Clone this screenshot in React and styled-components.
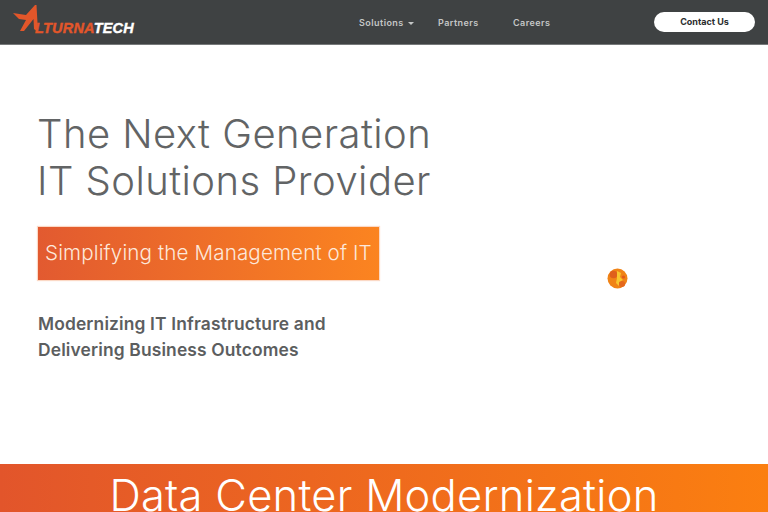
import React from "react";
import styled, { createGlobalStyle } from "styled-components";

const Global = createGlobalStyle`
  html, body { margin: 0; padding: 0; background: #fff; overflow: hidden; }
  body { font-family: "Inter", "Lato", sans-serif; width: 768px; height: 512px; }
`;
const Page = styled.div`
  width: 768px; height: 512px; overflow: hidden; display: flex; flex-direction: column;
`;
const Header = styled.header`
  height: 44px; flex: none; background: #3f4243; display: flex; align-items: center;
  border-bottom: 1px solid #76797a; box-sizing: content-box;
`;
const LogoWrap = styled.div`
  width: 359px; flex: none; display: flex; align-items: center; padding-left: 13px; box-sizing: border-box; height: 44px;
`;
const LogoMark = styled.svg` width: 32px; height: 28px; flex: none; margin-right: -10px; margin-top: -7px; `;
const LogoText = styled.span`
  font-family: "Liberation Sans", sans-serif; font-style: italic; font-weight: 700; font-size: 14.5px;
  letter-spacing: 0.2px; margin-top: 11px; color: #e2562a; -webkit-text-stroke: 0.4px currentColor;
`;
const LogoTech = styled.span` color: #fff; `;
const Nav = styled.nav` display: flex; align-items: center; flex: none; width: 295px; height: 44px; `;
const NavItem = styled.a`
  font-size: 9px; font-weight: 600; letter-spacing: 0.45px; color: #c4c6c6; width: ${p => p.$w}px; flex: none;
  display: flex; align-items: center; gap: 4px; margin-left: ${p => p.$offset || 0}px;
`;
const Caret = styled.span`
  width: 0; height: 0; border-left: 3px solid transparent; border-right: 3px solid transparent;
  border-top: 3px solid #c4c6c6; margin-top: 2px;
`;
const ContactButton = styled.button`
  width: 101px; height: 20px; margin-top: -1px; background: #fff; border: 0; border-radius: 10px; padding: 0;
  font-family: inherit; font-weight: 700; font-size: 9px; letter-spacing: 0; color: #2a2c2d;
`;
const Hero = styled.main`
  flex: 1; min-height: 0; position: relative; padding: 66px 0 0 38px; box-sizing: border-box;
`;
const Title = styled.h1`
  margin: 0 0 0 -1px; font-weight: 300; font-size: 40px; line-height: 46.5px; color: #626465; letter-spacing: 0.45px;
`;
const Tagline = styled.div`
  margin-top: 23px; width: 341px; height: 53px; box-sizing: border-box; display: flex; align-items: center; padding: 0 0 2px 7px;
  background: linear-gradient(90deg, #e25a30, #fb8420); box-shadow: 0 0 1px 1px #fbd9c6;
  color: #fde8db; font-size: 20.6px; font-weight: 300; letter-spacing: 0.13px; white-space: nowrap;
`;
const Sub = styled.p`
  margin: 31px 0 0; font-size: 17.4px; line-height: 25.5px; font-weight: 600; color: #5c5e5f; letter-spacing: 0.15px;
`;
const Loader = styled.svg`
  position: absolute; left: 607px; top: 223px; width: 21px; height: 21px;
`;
const Band = styled.section`
  height: 48px; flex: none; background: linear-gradient(90deg, #e2552b, #fb7f10); overflow: hidden;
  display: flex; justify-content: center; color: #fff; font-weight: 300; font-size: 43.5px; line-height: 63px; letter-spacing: 0.25px;
  white-space: nowrap;
`;

export default function App() {
  return (
    <Page>
      <Global />
      <Header>
        <LogoWrap>
          <LogoMark viewBox="0 0 32 28">
            <path fill="#e2562a" d="M0 8 L13 10 L22 0 L23.5 0 L25 27 L21 24 L20.5 14 L11 26 L7 26 L13 15 L6 14 Z" />
          </LogoMark>
          <LogoText>LTURNA<LogoTech>TECH</LogoTech></LogoText>
        </LogoWrap>
        <Nav>
          <NavItem $w={78}>Solutions <Caret /></NavItem>
          <NavItem $w={75} $offset={1}>Partners</NavItem>
          <NavItem $w={100}>Careers</NavItem>
        </Nav>
        <ContactButton>Contact Us</ContactButton>
      </Header>
      <Hero>
        <Title>The Next Generation<br />IT Solutions Provider</Title>
        <Tagline>Simplifying the Management of IT</Tagline>
        <Sub>Modernizing IT Infrastructure and<br />Delivering Business Outcomes</Sub>
        <Loader viewBox="0 0 21 21">
          <circle cx="10.5" cy="10.5" r="10" fill="#f08316" />
          <circle cx="6.5" cy="6.5" r="3.8" fill="#df5f1c" />
          <circle cx="15" cy="16" r="3" fill="#e4671c" />
          <path d="M10 3 L14 5 L13 9 L16 12 L12 14 L12 18 L9 15 L10 10 Z" fill="#f8c62e" />
          <circle cx="16.5" cy="9" r="1.6" fill="#e2571c" />
        </Loader>
      </Hero>
      <Band>Data Center Modernization</Band>
    </Page>
  );
}
